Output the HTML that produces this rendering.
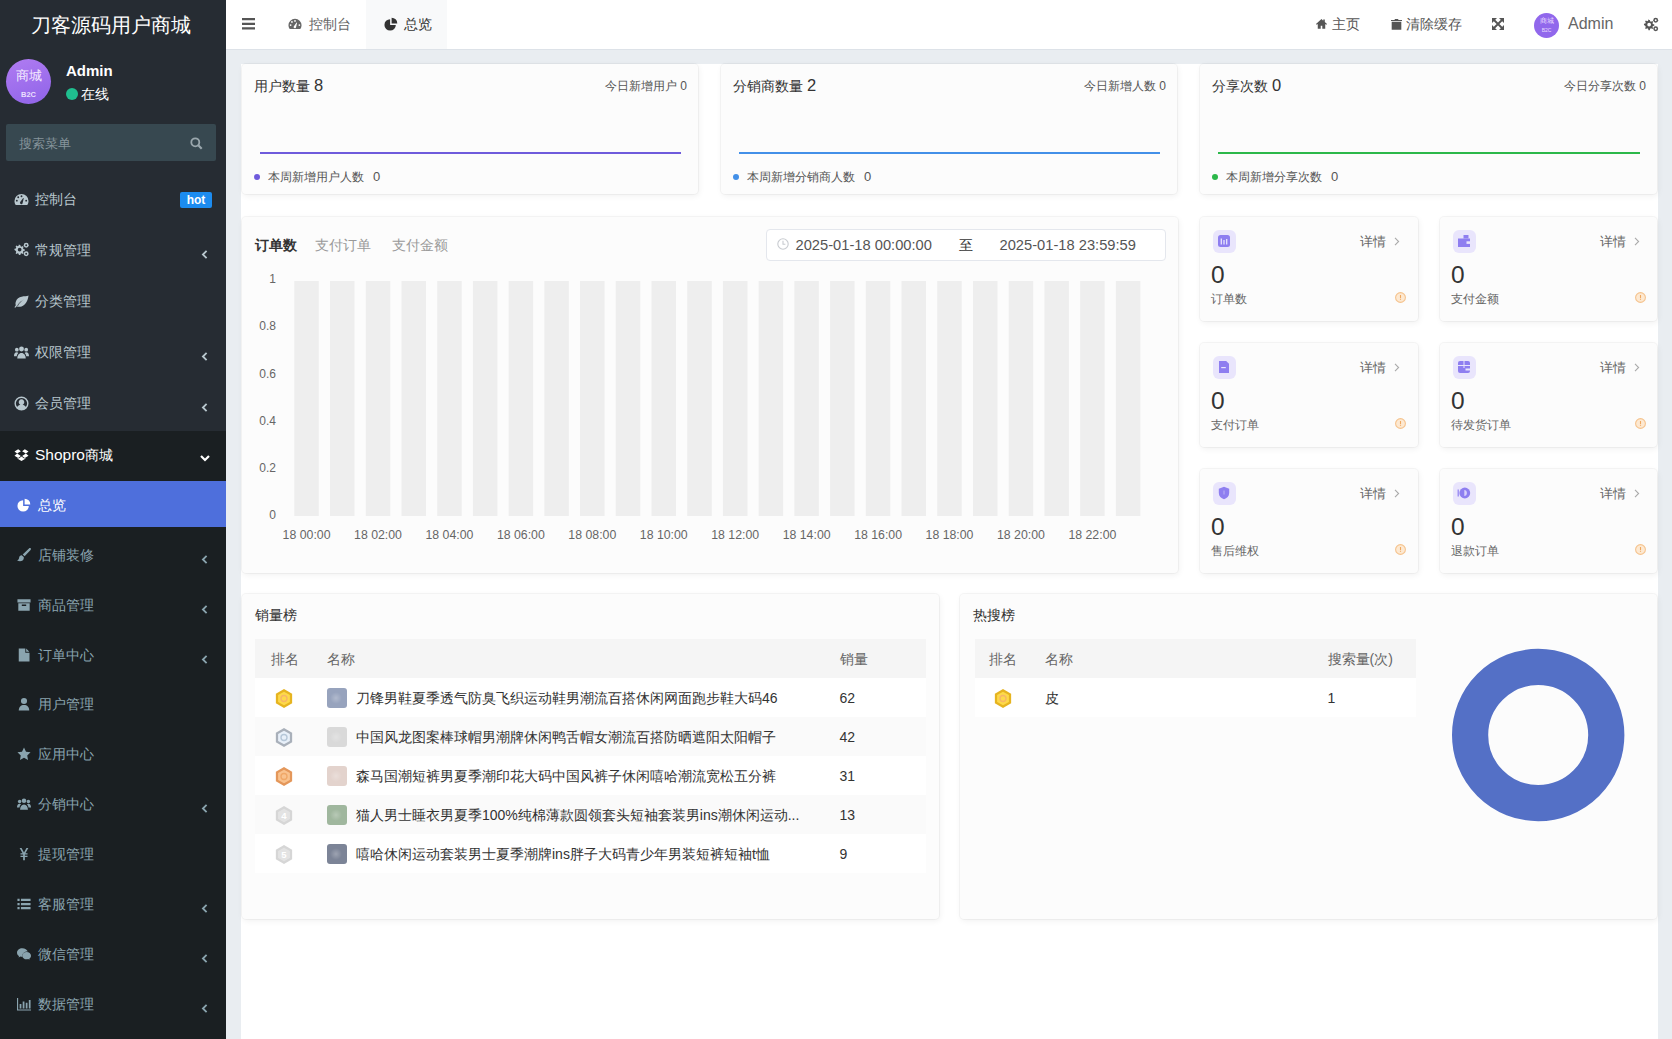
<!DOCTYPE html><html><head><meta charset="utf-8"><style>
*{box-sizing:border-box;margin:0;padding:0}
html,body{width:1672px;height:1039px;overflow:hidden}
body{font-family:"Liberation Sans",sans-serif;background:#e9edf1;position:relative;color:#333}
.a{position:absolute;white-space:nowrap}
svg{position:absolute;overflow:visible}
#sb{position:absolute;left:0;top:0;width:226px;height:1039px;background:#262c33;overflow:hidden}
#sb2{position:absolute;left:0;top:431px;width:226px;height:608px;background:#1a1f22}
.logo{left:0;width:221px;top:11px;line-height:28px;font-size:20px;color:#fff;text-align:center}
.mi{position:absolute;left:0;width:226px;height:20px;color:#b8c7ce;font-size:14px;line-height:20px}
.mi .tx{position:absolute;left:35px;top:0}
.sub{color:#8aa4af}
.sub .tx{left:38px}
#hd{position:absolute;left:226px;top:0;width:1446px;height:50px;background:#fff;border-bottom:1px solid #dde2e8}
#main{position:absolute;left:241px;top:64px;width:1417px;height:975px;background:#fff}
.card{position:absolute;background:#fcfcfc;border-radius:4px;box-shadow:0 0 0 1px rgba(0,0,0,.035),1px 2px 6px rgba(0,0,0,.06)}
.t14{font-size:14px;line-height:20px}
.t12{font-size:12px;line-height:16px}
</style></head><body>
<div id="sb"><div id="sb2"></div>
<div class="a logo">刀客源码用户商城</div>
<div class="a" style="left:6px;top:59px;width:45px;height:45px;border-radius:50%;background:linear-gradient(160deg,#b07cf2,#8f63e8)"></div>
<div class="a" style="left:6px;top:66.5px;width:45px;text-align:center;font-size:13px;line-height:17px;color:#f3eaff">商城</div>
<div class="a" style="left:6px;top:90px;width:45px;text-align:center;font-size:7.5px;line-height:9px;color:#eadfff;font-weight:bold">B2C</div>
<div class="a" style="left:66px;top:61px;font-size:15px;line-height:20px;color:#fff;font-weight:bold">Admin</div>
<div class="a" style="left:66px;top:88px;width:12px;height:12px;border-radius:50%;background:#1fbf8f"></div>
<div class="a" style="left:81px;top:84px;font-size:14px;line-height:20px;color:#fff">在线</div>
<div class="a" style="left:6px;top:124px;width:210px;height:37px;background:#374850;border-radius:2px"></div>
<div class="a" style="left:19px;top:134px;font-size:13px;line-height:20px;color:#86949b">搜索菜单</div>
<svg style="left:190px;top:137px" width="13" height="13" viewBox="0 0 13 13"><circle cx="5.3" cy="5.3" r="4" stroke="#9aa7ad" stroke-width="1.8" fill="none"/><path d="M8.3 8.3l3.4 3.4" stroke="#9aa7ad" stroke-width="2.2"/></svg>
<div class="mi" style="top:189.4px"><span class="tx">控制台</span></div>
<svg style="left:13.5px;top:191.9px" width="15" height="15" viewBox="0 0 16 16" fill="#b8c7ce"><path d="M8 2A7.5 7.5 0 0 0 .5 9.5c0 1.6.5 3.1 1.4 4.3h12.2c.9-1.2 1.4-2.7 1.4-4.3A7.5 7.5 0 0 0 8 2zM3 10.2a1 1 0 1 1 0-2 1 1 0 0 1 0 2zm1.5-3.6a1 1 0 1 1 0-2 1 1 0 0 1 0 2zM8 5.5a1 1 0 1 1 0-2 1 1 0 0 1 0 2zm1.2 6.2a1.4 1.4 0 1 1-2.4-1.2l3-4.2.6.3zM13 10.2a1 1 0 1 1 0-2 1 1 0 0 1 0 2z" fill-rule="evenodd"/></svg>
<div class="a" style="left:180px;top:191.9px;width:32px;height:16px;background:#1c8cf0;border-radius:2px;color:#fff;font-size:12px;font-weight:bold;line-height:16px;text-align:center">hot</div>
<div class="mi" style="top:239.7px"><span class="tx">常规管理</span></div>
<svg style="left:13.5px;top:242.2px" width="15" height="15" viewBox="0 0 16 16" fill="#b8c7ce"><path d="M6 3.2l.7-.1.4 1.4 1 .5 1.3-.7.9.9-.7 1.3.4 1 1.5.4v1.3l-1.5.4-.4 1 .7 1.3-.9.9-1.3-.7-1 .4-.4 1.5H5.3l-.4-1.5-1-.4-1.3.7-.9-.9.7-1.3-.4-1L.5 8.6V7.3L2 6.9l.4-1-.7-1.3.9-.9 1.3.7 1-.5.4-1.4zM6 6a2 2 0 1 0 0 4 2 2 0 0 0 0-4z" fill-rule="evenodd"/><circle cx="13" cy="3.5" r="2.6"/><circle cx="13" cy="12.5" r="2.6"/><circle cx="13" cy="3.5" r="1" fill="#262c33"/><circle cx="13" cy="12.5" r="1" fill="#262c33"/></svg>
<svg style="left:201.0px;top:249.7px" width="7" height="9" viewBox="0 0 7 9"><path d="M5.6 .8L1.9 4.5l3.7 3.7" stroke="#b8c7ce" stroke-width="1.8" fill="none"/></svg>
<div class="mi" style="top:291.0px"><span class="tx">分类管理</span></div>
<svg style="left:13.5px;top:293.5px" width="15" height="15" viewBox="0 0 16 16" fill="#b8c7ce"><path d="M15.5 1.5C12 3 4 1 1.8 8.5c-.4 1.4-.3 2.6.1 3.6L.5 14l.8.7 1.6-1.6c1.3.7 3.2.9 5.2.1C14 10.8 15 5 15.5 1.5zM3.5 12.2c2-3 4.5-5 7.5-6.5-3.5 2.2-5.5 4.5-6.8 7z" fill-rule="evenodd"/></svg>
<div class="mi" style="top:342.4px"><span class="tx">权限管理</span></div>
<svg style="left:13.5px;top:344.9px" width="15" height="15" viewBox="0 0 16 16" fill="#b8c7ce"><circle cx="8" cy="4.2" r="2.6"/><circle cx="3" cy="5" r="2"/><circle cx="13" cy="5" r="2"/><path d="M3.5 14.5c0-3.5 1.8-6 4.5-6s4.5 2.5 4.5 6z"/><path d="M0 12c0-2.5 1-4.2 3-4.2.8 0 1.3.3 1.6.6C3.6 9.3 3 10.6 2.9 12zM16 12c0-2.5-1-4.2-3-4.2-.8 0-1.3.3-1.6.6 1 .9 1.6 2.2 1.7 3.6z"/></svg>
<svg style="left:201.0px;top:352.4px" width="7" height="9" viewBox="0 0 7 9"><path d="M5.6 .8L1.9 4.5l3.7 3.7" stroke="#b8c7ce" stroke-width="1.8" fill="none"/></svg>
<div class="mi" style="top:393.3px"><span class="tx">会员管理</span></div>
<svg style="left:13.5px;top:395.8px" width="15" height="15" viewBox="0 0 16 16" fill="#b8c7ce"><path d="M8 .5a7.5 7.5 0 1 0 0 15 7.5 7.5 0 0 0 0-15zm0 1.6a5.9 5.9 0 0 1 4.6 9.6c-.8-1.4-2.2-2.2-3.4-2.4a3 3 0 1 0-2.4 0c-1.2.2-2.6 1-3.4 2.4A5.9 5.9 0 0 1 8 2.1z" fill-rule="evenodd"/></svg>
<svg style="left:201.0px;top:403.3px" width="7" height="9" viewBox="0 0 7 9"><path d="M5.6 .8L1.9 4.5l3.7 3.7" stroke="#b8c7ce" stroke-width="1.8" fill="none"/></svg>
<div class="mi" style="top:444.7px;color:#fff"><span class="tx"><span style="font-size:15.5px">Shopro</span>商城</span></div>
<svg style="left:14px;top:447.7px" width="15" height="14" viewBox="0 0 16 16" fill="#fff"><path d="M4.2 1.3L0 4l3 2.4L7.3 3.8zM11.8 1.3L8.7 3.8 13 6.4 16 4zM0 8.8l4.2 2.7L7.3 9 3 6.4zM13 6.4L8.7 9l3.1 2.5L16 8.8zM8 9.6l-3.1 2.5-1.3-.8v.9L8 14.8l4.4-2.6v-.9l-1.3.8z"/></svg>
<svg style="left:200px;top:453.7px" width="10" height="8" viewBox="0 0 10 8"><path d="M1 2l4 4 4-4" stroke="#fff" stroke-width="2.2" fill="none"/></svg>
<div class="a" style="left:0;top:481px;width:226px;height:46px;background:#4e6fdc"></div>
<div class="mi sub" style="top:495.0px;color:#fff"><span class="tx">总览</span></div>
<svg style="left:16.5px;top:498.0px" width="14" height="14" viewBox="0 0 16 16" fill="#fff"><path d="M7 2.5a6.5 6.5 0 1 0 6.5 6.5H7zM8.7.8v6.5h6.5A6.5 6.5 0 0 0 8.7.8z"/></svg>
<div class="mi sub" style="top:544.9px;color:#8aa4af"><span class="tx">店铺装修</span></div>
<svg style="left:16.5px;top:547.85px" width="14" height="14" viewBox="0 0 16 16" fill="#8aa4af"><path d="M15.6.4c-.5-.5-1.3-.4-1.9.1L6.5 7.3l2.2 2.2 6.8-7.2c.5-.6.6-1.4.1-1.9zM5.4 8.3C3.6 8.3 2.6 9.5 2.4 11 2.2 12.6 1.5 13.5 0 14c2.6 1.8 6.5 1.4 7.6-1.4.3-.9.3-1.6.1-2.2z"/></svg>
<svg style="left:201.0px;top:554.85px" width="7" height="9" viewBox="0 0 7 9"><path d="M5.6 .8L1.9 4.5l3.7 3.7" stroke="#8aa4af" stroke-width="1.8" fill="none"/></svg>
<div class="mi sub" style="top:594.7px;color:#8aa4af"><span class="tx">商品管理</span></div>
<svg style="left:16.5px;top:597.7px" width="14" height="14" viewBox="0 0 16 16" fill="#8aa4af"><path d="M.5 1.5h15v3.5H.5zM1.5 6h13v8.5h-13zM5.5 7.5v1.5h5V7.5z" fill-rule="evenodd"/></svg>
<svg style="left:201.0px;top:604.7px" width="7" height="9" viewBox="0 0 7 9"><path d="M5.6 .8L1.9 4.5l3.7 3.7" stroke="#8aa4af" stroke-width="1.8" fill="none"/></svg>
<div class="mi sub" style="top:644.5px;color:#8aa4af"><span class="tx">订单中心</span></div>
<svg style="left:16.5px;top:647.55px" width="14" height="14" viewBox="0 0 16 16" fill="#8aa4af"><path d="M2 .5h7.5v4.8h4.8V15.5H2zM10.5.7l3.6 3.6h-3.6z"/></svg>
<svg style="left:201.0px;top:654.55px" width="7" height="9" viewBox="0 0 7 9"><path d="M5.6 .8L1.9 4.5l3.7 3.7" stroke="#8aa4af" stroke-width="1.8" fill="none"/></svg>
<div class="mi sub" style="top:694.4px;color:#8aa4af"><span class="tx">用户管理</span></div>
<svg style="left:16.5px;top:697.4px" width="14" height="14" viewBox="0 0 16 16" fill="#8aa4af"><circle cx="8" cy="4.5" r="3.5"/><path d="M2 15.5c0-4 2.4-6.3 6-6.3s6 2.3 6 6.3z"/></svg>
<div class="mi sub" style="top:744.2px;color:#8aa4af"><span class="tx">应用中心</span></div>
<svg style="left:16.5px;top:747.25px" width="14" height="14" viewBox="0 0 16 16" fill="#8aa4af"><path d="M8 .6l2.3 4.8 5.2.7-3.8 3.6.9 5.2L8 12.4l-4.6 2.5.9-5.2L.5 6.1l5.2-.7z"/></svg>
<div class="mi sub" style="top:794.1px;color:#8aa4af"><span class="tx">分销中心</span></div>
<svg style="left:16.5px;top:797.1px" width="14" height="14" viewBox="0 0 16 16" fill="#8aa4af"><circle cx="8" cy="4.2" r="2.6"/><circle cx="3" cy="5" r="2"/><circle cx="13" cy="5" r="2"/><path d="M3.5 14.5c0-3.5 1.8-6 4.5-6s4.5 2.5 4.5 6z"/><path d="M0 12c0-2.5 1-4.2 3-4.2.8 0 1.3.3 1.6.6C3.6 9.3 3 10.6 2.9 12zM16 12c0-2.5-1-4.2-3-4.2-.8 0-1.3.3-1.6.6 1 .9 1.6 2.2 1.7 3.6z"/></svg>
<svg style="left:201.0px;top:804.1px" width="7" height="9" viewBox="0 0 7 9"><path d="M5.6 .8L1.9 4.5l3.7 3.7" stroke="#8aa4af" stroke-width="1.8" fill="none"/></svg>
<div class="mi sub" style="top:844.0px;color:#8aa4af"><span class="tx">提现管理</span></div>
<svg style="left:16.5px;top:846.95px" width="14" height="14" viewBox="0 0 16 16" fill="#8aa4af"><path d="M3 1h2.2L8 6.2 10.8 1H13L9.6 7H12v1.5H9v1.5h3v1.5H9V15H7v-3.5H4V10h3V8.5H4V7h2.4z"/></svg>
<div class="mi sub" style="top:893.8px;color:#8aa4af"><span class="tx">客服管理</span></div>
<svg style="left:16.5px;top:896.8px" width="14" height="14" viewBox="0 0 16 16" fill="#8aa4af"><path d="M.5 2h2.5v2.5H.5zM4.5 2h11v2.5h-11zM.5 6.8h2.5v2.5H.5zM4.5 6.8h11v2.5h-11zM.5 11.5h2.5V14H.5zM4.5 11.5h11V14h-11z"/></svg>
<svg style="left:201.0px;top:903.8px" width="7" height="9" viewBox="0 0 7 9"><path d="M5.6 .8L1.9 4.5l3.7 3.7" stroke="#8aa4af" stroke-width="1.8" fill="none"/></svg>
<div class="mi sub" style="top:943.7px;color:#8aa4af"><span class="tx">微信管理</span></div>
<svg style="left:16.5px;top:946.6500000000001px" width="14" height="14" viewBox="0 0 16 16" fill="#8aa4af"><path d="M6 1.5C2.7 1.5 0 3.7 0 6.5c0 1.6.9 3 2.3 3.9L1.8 12l2-1.1c.6.2 1.4.3 2.1.3h.4a4.6 4.6 0 0 1-.2-1.3c0-2.7 2.6-4.9 5.9-4.9h.3C11.6 3.1 9.1 1.5 6 1.5z"/><path d="M16 9.9c0-2.3-2.3-4.2-5-4.2S6 7.6 6 9.9s2.3 4.2 5 4.2c.6 0 1.2-.1 1.7-.3l1.7.9-.4-1.4c1.2-.8 2-2 2-3.4z"/></svg>
<svg style="left:201.0px;top:953.6500000000001px" width="7" height="9" viewBox="0 0 7 9"><path d="M5.6 .8L1.9 4.5l3.7 3.7" stroke="#8aa4af" stroke-width="1.8" fill="none"/></svg>
<div class="mi sub" style="top:993.5px;color:#8aa4af"><span class="tx">数据管理</span></div>
<svg style="left:16.5px;top:996.5px" width="14" height="14" viewBox="0 0 16 16" fill="#8aa4af"><path d="M0 1h1.3v13.2H16V15.5H0zM3 8h2v5H3zM6.5 5h2v8h-2zM10 6.5h2V13h-2zM13.5 3.5h2V13h-2z"/></svg>
<svg style="left:201.0px;top:1003.5px" width="7" height="9" viewBox="0 0 7 9"><path d="M5.6 .8L1.9 4.5l3.7 3.7" stroke="#8aa4af" stroke-width="1.8" fill="none"/></svg>
</div>
<div id="hd"></div>
<svg style="left:242px;top:18px" width="14" height="12" viewBox="0 0 14 12"><path d="M0 1.2h13M0 5.8h13M0 10.4h13" stroke="#555" stroke-width="2.2"/></svg>
<svg style="left:288px;top:17px" width="14" height="14" viewBox="0 0 16 16" fill="#666"><path d="M8 2A7.5 7.5 0 0 0 .5 9.5c0 1.6.5 3.1 1.4 4.3h12.2c.9-1.2 1.4-2.7 1.4-4.3A7.5 7.5 0 0 0 8 2zM3 10.2a1 1 0 1 1 0-2 1 1 0 0 1 0 2zm1.5-3.6a1 1 0 1 1 0-2 1 1 0 0 1 0 2zM8 5.5a1 1 0 1 1 0-2 1 1 0 0 1 0 2zm1.2 6.2a1.4 1.4 0 1 1-2.4-1.2l3-4.2.6.3zM13 10.2a1 1 0 1 1 0-2 1 1 0 0 1 0 2z" fill-rule="evenodd"/></svg>
<div class="a" style="left:309px;top:14.00px;font-size:14px;line-height:20px;color:#666;font-weight:normal;">控制台</div>
<div class="a" style="left:366px;top:0;width:81px;height:49px;background:#f8f9fa"></div>
<svg style="left:383.5px;top:17px" width="14" height="14" viewBox="0 0 16 16" fill="#333"><path d="M7 2.5a6.5 6.5 0 1 0 6.5 6.5H7zM8.7.8v6.5h6.5A6.5 6.5 0 0 0 8.7.8z"/></svg>
<div class="a" style="left:404px;top:14.00px;font-size:14px;line-height:20px;color:#333;font-weight:normal;">总览</div>
<svg style="left:1315px;top:18px" width="13" height="11.5" viewBox="0 0 16 16" fill="#555"><path d="M8 1.5L.3 8.3l1.1 1.2L2.8 8.3V15h4.1v-4.2h2.2V15h4.1V8.3l1.4 1.2 1.1-1.2L12.6 5.6V2h-2.2v1.7z"/></svg>
<div class="a" style="left:1332px;top:14.00px;font-size:14px;line-height:20px;color:#555;font-weight:normal;">主页</div>
<svg style="left:1390.5px;top:17.5px" width="11" height="13" viewBox="0 0 16 16" fill="#555"><path d="M1 4h14v11.5H1zM0 1.5h5L5.8 0h4.4L11 1.5h5V3H0z"/></svg>
<div class="a" style="left:1406px;top:14.00px;font-size:14px;line-height:20px;color:#555;font-weight:normal;">清除缓存</div>
<svg style="left:1492px;top:18px" width="12" height="12" viewBox="0 0 12 12" fill="#555"><path d="M0 0h5L0 5zM12 0v5L7 0zM0 12V7l5 5zM12 12H7l5-5z"/><path d="M1.5 1.5l9 9M10.5 1.5l-9 9" stroke="#555" stroke-width="1.9"/></svg>
<div class="a" style="left:1534px;top:13px;width:25px;height:25px;border-radius:50%;background:#9168ec"></div>
<div class="a" style="left:1534px;top:16px;width:25px;text-align:center;font-size:7px;line-height:9px;color:#e9ddff">商城</div>
<div class="a" style="left:1534px;top:27px;width:25px;text-align:center;font-size:5px;line-height:6px;color:#e9ddff">B2C</div>
<div class="a" style="left:1568px;top:14px;font-size:16px;line-height:20px;color:#666">Admin</div>
<svg style="left:1642.5px;top:17px" width="16" height="15" viewBox="0 0 16 16" fill="#555"><path d="M6 3.2l.7-.1.4 1.4 1 .5 1.3-.7.9.9-.7 1.3.4 1 1.5.4v1.3l-1.5.4-.4 1 .7 1.3-.9.9-1.3-.7-1 .4-.4 1.5H5.3l-.4-1.5-1-.4-1.3.7-.9-.9.7-1.3-.4-1L.5 8.6V7.3L2 6.9l.4-1-.7-1.3.9-.9 1.3.7 1-.5.4-1.4zM6 6a2 2 0 1 0 0 4 2 2 0 0 0 0-4z" fill-rule="evenodd"/><circle cx="13" cy="3.5" r="2.6"/><circle cx="13" cy="12.5" r="2.6"/><circle cx="13" cy="3.5" r="1" fill="#fff"/><circle cx="13" cy="12.5" r="1" fill="#fff"/></svg>
<div id="main"></div>
<div class="card" style="left:242px;top:64px;width:456px;height:130px;"></div>
<div class="a" style="left:254px;top:74.60px;font-size:14px;line-height:20px;color:#333;font-weight:normal;">用户数量 <span style="font-size:16.5px">8</span></div>
<div class="a" style="right:985px;top:77.50px;font-size:12px;line-height:16px;color:#555;font-weight:normal;">今日新增用户 0</div>
<div class="a" style="left:260px;top:152px;width:421px;height:2px;background:#6f5bdc"></div>
<div class="a" style="left:254px;top:174px;width:6px;height:6px;border-radius:50%;background:#6f5bdc"></div>
<div class="a" style="left:267.5px;top:169.00px;font-size:12px;line-height:16px;color:#555;font-weight:normal;">本周新增用户人数<span style="margin-left:9.5px;font-size:13px">0</span></div>
<div class="card" style="left:721px;top:64px;width:456px;height:130px;"></div>
<div class="a" style="left:733px;top:74.60px;font-size:14px;line-height:20px;color:#333;font-weight:normal;">分销商数量 <span style="font-size:16.5px">2</span></div>
<div class="a" style="right:506px;top:77.50px;font-size:12px;line-height:16px;color:#555;font-weight:normal;">今日新增人数 0</div>
<div class="a" style="left:739px;top:152px;width:421px;height:2px;background:#4390e8"></div>
<div class="a" style="left:733px;top:174px;width:6px;height:6px;border-radius:50%;background:#4390e8"></div>
<div class="a" style="left:746.5px;top:169.00px;font-size:12px;line-height:16px;color:#555;font-weight:normal;">本周新增分销商人数<span style="margin-left:9.5px;font-size:13px">0</span></div>
<div class="card" style="left:1200px;top:64px;width:457px;height:130px;"></div>
<div class="a" style="left:1212px;top:74.60px;font-size:14px;line-height:20px;color:#333;font-weight:normal;">分享次数 <span style="font-size:16.5px">0</span></div>
<div class="a" style="right:26px;top:77.50px;font-size:12px;line-height:16px;color:#555;font-weight:normal;">今日分享次数 0</div>
<div class="a" style="left:1218px;top:152px;width:422px;height:2px;background:#2cb84a"></div>
<div class="a" style="left:1212px;top:174px;width:6px;height:6px;border-radius:50%;background:#2cb84a"></div>
<div class="a" style="left:1225.5px;top:169.00px;font-size:12px;line-height:16px;color:#555;font-weight:normal;">本周新增分享次数<span style="margin-left:9.5px;font-size:13px">0</span></div>
<div class="card" style="left:242px;top:217px;width:936px;height:356px;"></div>
<div class="a" style="left:254.5px;top:235.00px;font-size:14px;line-height:20px;color:#333;font-weight:bold;">订单数</div>
<div class="a" style="left:315px;top:235.00px;font-size:14px;line-height:20px;color:#999;font-weight:normal;">支付订单</div>
<div class="a" style="left:392px;top:235.00px;font-size:14px;line-height:20px;color:#999;font-weight:normal;">支付金额</div>
<div class="a" style="left:766px;top:229px;width:400px;height:32px;border:1px solid #e4e7ed;border-radius:4px;background:#fff"></div>
<svg style="left:777px;top:238px" width="12" height="12" viewBox="0 0 12 12"><circle cx="6" cy="6" r="5.2" stroke="#c8cbd0" stroke-width="1.1" fill="none"/><path d="M6 2.8V6.3h2.4" stroke="#c8cbd0" stroke-width="1.1" fill="none"/></svg>
<div class="a" style="left:795.5px;top:234.50px;font-size:14.7px;line-height:20px;color:#555;font-weight:normal;">2025-01-18 00:00:00</div>
<div class="a" style="left:959px;top:234.50px;font-size:14px;line-height:20px;color:#333;font-weight:normal;">至</div>
<div class="a" style="left:999.5px;top:234.50px;font-size:14.7px;line-height:20px;color:#555;font-weight:normal;">2025-01-18 23:59:59</div>
<div class="a" style="right:1396px;top:271.30px;font-size:12px;line-height:16px;color:#666;font-weight:normal;">1</div>
<div class="a" style="right:1396px;top:318.30px;font-size:12px;line-height:16px;color:#666;font-weight:normal;">0.8</div>
<div class="a" style="right:1396px;top:365.60px;font-size:12px;line-height:16px;color:#666;font-weight:normal;">0.6</div>
<div class="a" style="right:1396px;top:412.80px;font-size:12px;line-height:16px;color:#666;font-weight:normal;">0.4</div>
<div class="a" style="right:1396px;top:460.00px;font-size:12px;line-height:16px;color:#666;font-weight:normal;">0.2</div>
<div class="a" style="right:1396px;top:507.20px;font-size:12px;line-height:16px;color:#666;font-weight:normal;">0</div>
<svg style="left:0;top:0" width="1672" height="1039" fill="#eeeeee"><rect x="294.30" y="281" width="24.5" height="235" /><rect x="330.02" y="281" width="24.5" height="235" /><rect x="365.74" y="281" width="24.5" height="235" /><rect x="401.46" y="281" width="24.5" height="235" /><rect x="437.18" y="281" width="24.5" height="235" /><rect x="472.90" y="281" width="24.5" height="235" /><rect x="508.62" y="281" width="24.5" height="235" /><rect x="544.34" y="281" width="24.5" height="235" /><rect x="580.06" y="281" width="24.5" height="235" /><rect x="615.78" y="281" width="24.5" height="235" /><rect x="651.50" y="281" width="24.5" height="235" /><rect x="687.22" y="281" width="24.5" height="235" /><rect x="722.94" y="281" width="24.5" height="235" /><rect x="758.66" y="281" width="24.5" height="235" /><rect x="794.38" y="281" width="24.5" height="235" /><rect x="830.10" y="281" width="24.5" height="235" /><rect x="865.82" y="281" width="24.5" height="235" /><rect x="901.54" y="281" width="24.5" height="235" /><rect x="937.26" y="281" width="24.5" height="235" /><rect x="972.98" y="281" width="24.5" height="235" /><rect x="1008.70" y="281" width="24.5" height="235" /><rect x="1044.42" y="281" width="24.5" height="235" /><rect x="1080.14" y="281" width="24.5" height="235" /><rect x="1115.86" y="281" width="24.5" height="235" /></svg>
<div class="a" style="left:106.55000000000001px;width:400px;text-align:center;top:527.20px;font-size:12.3px;line-height:16px;color:#666;font-weight:normal;">18 00:00</div>
<div class="a" style="left:177.99px;width:400px;text-align:center;top:527.20px;font-size:12.3px;line-height:16px;color:#666;font-weight:normal;">18 02:00</div>
<div class="a" style="left:249.43px;width:400px;text-align:center;top:527.20px;font-size:12.3px;line-height:16px;color:#666;font-weight:normal;">18 04:00</div>
<div class="a" style="left:320.87px;width:400px;text-align:center;top:527.20px;font-size:12.3px;line-height:16px;color:#666;font-weight:normal;">18 06:00</div>
<div class="a" style="left:392.30999999999995px;width:400px;text-align:center;top:527.20px;font-size:12.3px;line-height:16px;color:#666;font-weight:normal;">18 08:00</div>
<div class="a" style="left:463.75px;width:400px;text-align:center;top:527.20px;font-size:12.3px;line-height:16px;color:#666;font-weight:normal;">18 10:00</div>
<div class="a" style="left:535.19px;width:400px;text-align:center;top:527.20px;font-size:12.3px;line-height:16px;color:#666;font-weight:normal;">18 12:00</div>
<div class="a" style="left:606.63px;width:400px;text-align:center;top:527.20px;font-size:12.3px;line-height:16px;color:#666;font-weight:normal;">18 14:00</div>
<div class="a" style="left:678.0699999999999px;width:400px;text-align:center;top:527.20px;font-size:12.3px;line-height:16px;color:#666;font-weight:normal;">18 16:00</div>
<div class="a" style="left:749.51px;width:400px;text-align:center;top:527.20px;font-size:12.3px;line-height:16px;color:#666;font-weight:normal;">18 18:00</div>
<div class="a" style="left:820.95px;width:400px;text-align:center;top:527.20px;font-size:12.3px;line-height:16px;color:#666;font-weight:normal;">18 20:00</div>
<div class="a" style="left:892.3899999999999px;width:400px;text-align:center;top:527.20px;font-size:12.3px;line-height:16px;color:#666;font-weight:normal;">18 22:00</div>
<div class="card" style="left:1200px;top:217px;width:218px;height:104px;"></div>
<div class="a" style="left:1212.5px;top:229.5px;width:23px;height:23px;border-radius:6px;background:#e9e5fc"></div>
<svg style="left:1216px;top:233px" width="16" height="16" viewBox="0 0 16 16" fill="#8e7ef0"><rect x="2" y="2" width="12" height="12" rx="2.5"/><path d="M5.3 5.5v6M8 7v4.5M10.7 6v5.5" stroke="#e9e5fc" stroke-width="1.3"/></svg>
<div class="a" style="left:1360.3px;top:233.50px;font-size:12.5px;line-height:16px;color:#666;font-weight:normal;">详情</div>
<svg style="left:1394px;top:237px" width="6" height="9" viewBox="0 0 6 9"><path d="M1 .8l3.6 3.7L1 8.2" stroke="#aaa" stroke-width="1.1" fill="none"/></svg>
<div class="a" style="left:1211px;top:260.00px;font-size:24.5px;line-height:30px;color:#333;font-weight:normal;">0</div>
<div class="a" style="left:1211px;top:291.00px;font-size:12px;line-height:16px;color:#666;font-weight:normal;">订单数</div>
<svg style="left:1394.5px;top:292px" width="11" height="11" viewBox="0 0 11 11"><circle cx="5.5" cy="5.5" r="4.9" stroke="#f5c38e" stroke-width="1.1" fill="#fde9d2"/><path d="M5.5 3v3.2M5.5 7.2v.9" stroke="#f0a860" stroke-width="1.1"/></svg>
<div class="card" style="left:1440px;top:217px;width:217px;height:104px;"></div>
<div class="a" style="left:1452.5px;top:229.5px;width:23px;height:23px;border-radius:6px;background:#e9e5fc"></div>
<svg style="left:1456px;top:233px" width="16" height="16" viewBox="0 0 16 16" fill="#8e7ef0"><path d="M2 5.5h12v8.5H2z"/><path d="M7.5 2h5v3.5h-5z"/><rect x="10.5" y="8.3" width="3.5" height="2.6" fill="#e9e5fc"/></svg>
<div class="a" style="left:1600.3px;top:233.50px;font-size:12.5px;line-height:16px;color:#666;font-weight:normal;">详情</div>
<svg style="left:1634px;top:237px" width="6" height="9" viewBox="0 0 6 9"><path d="M1 .8l3.6 3.7L1 8.2" stroke="#aaa" stroke-width="1.1" fill="none"/></svg>
<div class="a" style="left:1451px;top:260.00px;font-size:24.5px;line-height:30px;color:#333;font-weight:normal;">0</div>
<div class="a" style="left:1451px;top:291.00px;font-size:12px;line-height:16px;color:#666;font-weight:normal;">支付金额</div>
<svg style="left:1634.5px;top:292px" width="11" height="11" viewBox="0 0 11 11"><circle cx="5.5" cy="5.5" r="4.9" stroke="#f5c38e" stroke-width="1.1" fill="#fde9d2"/><path d="M5.5 3v3.2M5.5 7.2v.9" stroke="#f0a860" stroke-width="1.1"/></svg>
<div class="card" style="left:1200px;top:343px;width:218px;height:104px;"></div>
<div class="a" style="left:1212.5px;top:355.5px;width:23px;height:23px;border-radius:6px;background:#e9e5fc"></div>
<svg style="left:1216px;top:359px" width="16" height="16" viewBox="0 0 16 16" fill="#8e7ef0"><path d="M3 2h7.2L13 4.8V14H3z"/><path d="M5.2 8.6h4.6" stroke="#e9e5fc" stroke-width="1.2"/></svg>
<div class="a" style="left:1360.3px;top:359.50px;font-size:12.5px;line-height:16px;color:#666;font-weight:normal;">详情</div>
<svg style="left:1394px;top:363px" width="6" height="9" viewBox="0 0 6 9"><path d="M1 .8l3.6 3.7L1 8.2" stroke="#aaa" stroke-width="1.1" fill="none"/></svg>
<div class="a" style="left:1211px;top:386.00px;font-size:24.5px;line-height:30px;color:#333;font-weight:normal;">0</div>
<div class="a" style="left:1211px;top:417.00px;font-size:12px;line-height:16px;color:#666;font-weight:normal;">支付订单</div>
<svg style="left:1394.5px;top:418px" width="11" height="11" viewBox="0 0 11 11"><circle cx="5.5" cy="5.5" r="4.9" stroke="#f5c38e" stroke-width="1.1" fill="#fde9d2"/><path d="M5.5 3v3.2M5.5 7.2v.9" stroke="#f0a860" stroke-width="1.1"/></svg>
<div class="card" style="left:1440px;top:343px;width:217px;height:104px;"></div>
<div class="a" style="left:1452.5px;top:355.5px;width:23px;height:23px;border-radius:6px;background:#e9e5fc"></div>
<svg style="left:1456px;top:359px" width="16" height="16" viewBox="0 0 16 16" fill="#8e7ef0"><rect x="2" y="2" width="12" height="12" rx="2"/><path d="M8 2v7M2 6.5h12" stroke="#e9e5fc" stroke-width="1"/><rect x="9.5" y="9.5" width="4.5" height="2" fill="#e9e5fc"/></svg>
<div class="a" style="left:1600.3px;top:359.50px;font-size:12.5px;line-height:16px;color:#666;font-weight:normal;">详情</div>
<svg style="left:1634px;top:363px" width="6" height="9" viewBox="0 0 6 9"><path d="M1 .8l3.6 3.7L1 8.2" stroke="#aaa" stroke-width="1.1" fill="none"/></svg>
<div class="a" style="left:1451px;top:386.00px;font-size:24.5px;line-height:30px;color:#333;font-weight:normal;">0</div>
<div class="a" style="left:1451px;top:417.00px;font-size:12px;line-height:16px;color:#666;font-weight:normal;">待发货订单</div>
<svg style="left:1634.5px;top:418px" width="11" height="11" viewBox="0 0 11 11"><circle cx="5.5" cy="5.5" r="4.9" stroke="#f5c38e" stroke-width="1.1" fill="#fde9d2"/><path d="M5.5 3v3.2M5.5 7.2v.9" stroke="#f0a860" stroke-width="1.1"/></svg>
<div class="card" style="left:1200px;top:469px;width:218px;height:104px;"></div>
<div class="a" style="left:1212.5px;top:481.5px;width:23px;height:23px;border-radius:6px;background:#e9e5fc"></div>
<svg style="left:1216px;top:485px" width="16" height="16" viewBox="0 0 16 16" fill="#8e7ef0"><path d="M8 1.8l5.2 1.9v4.4c0 3.2-2.3 5.3-5.2 6.2-2.9-.9-5.2-3-5.2-6.2V3.7z"/><path d="M8 5.5v4" stroke="#e9e5fc" stroke-width="1" opacity=".5"/></svg>
<div class="a" style="left:1360.3px;top:485.50px;font-size:12.5px;line-height:16px;color:#666;font-weight:normal;">详情</div>
<svg style="left:1394px;top:489px" width="6" height="9" viewBox="0 0 6 9"><path d="M1 .8l3.6 3.7L1 8.2" stroke="#aaa" stroke-width="1.1" fill="none"/></svg>
<div class="a" style="left:1211px;top:512.00px;font-size:24.5px;line-height:30px;color:#333;font-weight:normal;">0</div>
<div class="a" style="left:1211px;top:543.00px;font-size:12px;line-height:16px;color:#666;font-weight:normal;">售后维权</div>
<svg style="left:1394.5px;top:544px" width="11" height="11" viewBox="0 0 11 11"><circle cx="5.5" cy="5.5" r="4.9" stroke="#f5c38e" stroke-width="1.1" fill="#fde9d2"/><path d="M5.5 3v3.2M5.5 7.2v.9" stroke="#f0a860" stroke-width="1.1"/></svg>
<div class="card" style="left:1440px;top:469px;width:217px;height:104px;"></div>
<div class="a" style="left:1452.5px;top:481.5px;width:23px;height:23px;border-radius:6px;background:#e9e5fc"></div>
<svg style="left:1456px;top:485px" width="16" height="16" viewBox="0 0 16 16" fill="#8e7ef0"><circle cx="8.8" cy="8" r="5.4"/><path d="M2.2 4.5v7" stroke="#8e7ef0" stroke-width="1.2"/><path d="M8.3 5v6c1.5 0 2.6-1.2 2.6-3S9.8 5 8.3 5z" fill="#d9d2fb"/></svg>
<div class="a" style="left:1600.3px;top:485.50px;font-size:12.5px;line-height:16px;color:#666;font-weight:normal;">详情</div>
<svg style="left:1634px;top:489px" width="6" height="9" viewBox="0 0 6 9"><path d="M1 .8l3.6 3.7L1 8.2" stroke="#aaa" stroke-width="1.1" fill="none"/></svg>
<div class="a" style="left:1451px;top:512.00px;font-size:24.5px;line-height:30px;color:#333;font-weight:normal;">0</div>
<div class="a" style="left:1451px;top:543.00px;font-size:12px;line-height:16px;color:#666;font-weight:normal;">退款订单</div>
<svg style="left:1634.5px;top:544px" width="11" height="11" viewBox="0 0 11 11"><circle cx="5.5" cy="5.5" r="4.9" stroke="#f5c38e" stroke-width="1.1" fill="#fde9d2"/><path d="M5.5 3v3.2M5.5 7.2v.9" stroke="#f0a860" stroke-width="1.1"/></svg>
<div class="card" style="left:242px;top:594px;width:697px;height:325px;"></div>
<div class="a" style="left:254.5px;top:605.00px;font-size:14px;line-height:20px;color:#333;font-weight:normal;">销量榜</div>
<div class="a" style="left:255px;top:638.5px;width:671px;height:39px;background:#f5f5f5"></div>
<div class="a" style="left:270.5px;top:649.00px;font-size:14px;line-height:20px;color:#666;font-weight:normal;">排名</div>
<div class="a" style="left:326.5px;top:649.00px;font-size:14px;line-height:20px;color:#666;font-weight:normal;">名称</div>
<div class="a" style="left:839.5px;top:649.00px;font-size:14px;line-height:20px;color:#666;font-weight:normal;">销量</div>
<div class="a" style="left:255px;top:677.5px;width:671px;height:39px;background:#fff"></div>
<svg style="left:275px;top:688.5px" width="18" height="19" viewBox="0 0 18 19"><polygon points="9.00,0.10 0.86,4.80 0.86,14.20 9.00,18.90 17.14,14.20 17.14,4.80" fill="#e6b420"/><polygon points="9.00,2.70 3.11,6.10 3.11,12.90 9.00,16.30 14.89,12.90 14.89,6.10" fill="#fdd94a"/><circle cx="9" cy="9.5" r="3" fill="none" stroke="#f6b668" stroke-width="1.4"/></svg>
<div class="a" style="left:326.5px;top:688.0px;width:20px;height:20px;border-radius:3px;background:#97a3bd"></div>
<div class="a" style="left:330px;top:692.0px;width:12px;height:12px;border-radius:50%;background:radial-gradient(rgba(255,255,255,.25),rgba(255,255,255,0) 70%)"></div>
<div class="a" style="left:356px;top:688.00px;font-size:14px;line-height:20px;color:#333;font-weight:normal;">刀锋男鞋夏季透气防臭飞织运动鞋男潮流百搭休闲网面跑步鞋大码46</div>
<div class="a" style="left:839.5px;top:688.00px;font-size:14px;line-height:20px;color:#333;font-weight:normal;">62</div>
<div class="a" style="left:255px;top:716.5px;width:671px;height:39px;background:#fafafa"></div>
<svg style="left:275px;top:727.5px" width="18" height="19" viewBox="0 0 18 19"><polygon points="9.00,0.10 0.86,4.80 0.86,14.20 9.00,18.90 17.14,14.20 17.14,4.80" fill="#a9b0ba"/><polygon points="9.00,2.70 3.11,6.10 3.11,12.90 9.00,16.30 14.89,12.90 14.89,6.10" fill="#e8f0f9"/><circle cx="9" cy="9.5" r="3" fill="none" stroke="#b6c7d8" stroke-width="1.4"/></svg>
<div class="a" style="left:326.5px;top:727.0px;width:20px;height:20px;border-radius:3px;background:#d9d9d9"></div>
<div class="a" style="left:330px;top:731.0px;width:12px;height:12px;border-radius:50%;background:radial-gradient(rgba(255,255,255,.25),rgba(255,255,255,0) 70%)"></div>
<div class="a" style="left:356px;top:727.00px;font-size:14px;line-height:20px;color:#333;font-weight:normal;">中国风龙图案棒球帽男潮牌休闲鸭舌帽女潮流百搭防晒遮阳太阳帽子</div>
<div class="a" style="left:839.5px;top:727.00px;font-size:14px;line-height:20px;color:#333;font-weight:normal;">42</div>
<div class="a" style="left:255px;top:755.5px;width:671px;height:39px;background:#fff"></div>
<svg style="left:275px;top:766.5px" width="18" height="19" viewBox="0 0 18 19"><polygon points="9.00,0.10 0.86,4.80 0.86,14.20 9.00,18.90 17.14,14.20 17.14,4.80" fill="#e4975a"/><polygon points="9.00,2.70 3.11,6.10 3.11,12.90 9.00,16.30 14.89,12.90 14.89,6.10" fill="#f9c28e"/><circle cx="9" cy="9.5" r="3" fill="none" stroke="#f0a868" stroke-width="1.4"/></svg>
<div class="a" style="left:326.5px;top:766.0px;width:20px;height:20px;border-radius:3px;background:#e3d3cd"></div>
<div class="a" style="left:330px;top:770.0px;width:12px;height:12px;border-radius:50%;background:radial-gradient(rgba(255,255,255,.25),rgba(255,255,255,0) 70%)"></div>
<div class="a" style="left:356px;top:766.00px;font-size:14px;line-height:20px;color:#333;font-weight:normal;">森马国潮短裤男夏季潮印花大码中国风裤子休闲嘻哈潮流宽松五分裤</div>
<div class="a" style="left:839.5px;top:766.00px;font-size:14px;line-height:20px;color:#333;font-weight:normal;">31</div>
<div class="a" style="left:255px;top:794.5px;width:671px;height:39px;background:#fafafa"></div>
<svg style="left:275px;top:805.5px" width="18" height="19" viewBox="0 0 18 19"><polygon points="9.00,0.10 0.86,4.80 0.86,14.20 9.00,18.90 17.14,14.20 17.14,4.80" fill="#d6d6d6"/><polygon points="9.00,2.70 3.11,6.10 3.11,12.90 9.00,16.30 14.89,12.90 14.89,6.10" fill="#e3e3e3"/><text x="9" y="12.8" font-size="9.5" text-anchor="middle" fill="#fff" font-weight="bold" font-family="Liberation Sans">4</text></svg>
<div class="a" style="left:326.5px;top:805.0px;width:20px;height:20px;border-radius:3px;background:#a0b79e"></div>
<div class="a" style="left:330px;top:809.0px;width:12px;height:12px;border-radius:50%;background:radial-gradient(rgba(255,255,255,.25),rgba(255,255,255,0) 70%)"></div>
<div class="a" style="left:356px;top:805.00px;font-size:14px;line-height:20px;color:#333;font-weight:normal;">猫人男士睡衣男夏季100%纯棉薄款圆领套头短袖套装男ins潮休闲运动...</div>
<div class="a" style="left:839.5px;top:805.00px;font-size:14px;line-height:20px;color:#333;font-weight:normal;">13</div>
<div class="a" style="left:255px;top:833.5px;width:671px;height:39px;background:#fff"></div>
<svg style="left:275px;top:844.5px" width="18" height="19" viewBox="0 0 18 19"><polygon points="9.00,0.10 0.86,4.80 0.86,14.20 9.00,18.90 17.14,14.20 17.14,4.80" fill="#d6d6d6"/><polygon points="9.00,2.70 3.11,6.10 3.11,12.90 9.00,16.30 14.89,12.90 14.89,6.10" fill="#e3e3e3"/><text x="9" y="12.8" font-size="9.5" text-anchor="middle" fill="#fff" font-weight="bold" font-family="Liberation Sans">5</text></svg>
<div class="a" style="left:326.5px;top:844.0px;width:20px;height:20px;border-radius:3px;background:#7c8497"></div>
<div class="a" style="left:330px;top:848.0px;width:12px;height:12px;border-radius:50%;background:radial-gradient(rgba(255,255,255,.25),rgba(255,255,255,0) 70%)"></div>
<div class="a" style="left:356px;top:844.00px;font-size:14px;line-height:20px;color:#333;font-weight:normal;">嘻哈休闲运动套装男士夏季潮牌ins胖子大码青少年男装短裤短袖t恤</div>
<div class="a" style="left:839.5px;top:844.00px;font-size:14px;line-height:20px;color:#333;font-weight:normal;">9</div>
<div class="card" style="left:960px;top:594px;width:697px;height:325px;"></div>
<div class="a" style="left:972.5px;top:605.00px;font-size:14px;line-height:20px;color:#333;font-weight:normal;">热搜榜</div>
<div class="a" style="left:975px;top:638.5px;width:441px;height:39px;background:#f5f5f5"></div>
<div class="a" style="left:988.5px;top:649.00px;font-size:14px;line-height:20px;color:#666;font-weight:normal;">排名</div>
<div class="a" style="left:1044.5px;top:649.00px;font-size:14px;line-height:20px;color:#666;font-weight:normal;">名称</div>
<div class="a" style="left:1327.5px;top:649.00px;font-size:14px;line-height:20px;color:#666;font-weight:normal;">搜索量(次)</div>
<div class="a" style="left:975px;top:677.5px;width:441px;height:39px;background:#fff"></div>
<svg style="left:994px;top:689.0px" width="18" height="19" viewBox="0 0 18 19"><polygon points="9.00,0.10 0.86,4.80 0.86,14.20 9.00,18.90 17.14,14.20 17.14,4.80" fill="#e6b420"/><polygon points="9.00,2.70 3.11,6.10 3.11,12.90 9.00,16.30 14.89,12.90 14.89,6.10" fill="#fdd94a"/><circle cx="9" cy="9.5" r="3" fill="none" stroke="#f6b668" stroke-width="1.4"/></svg>
<div class="a" style="left:1044.5px;top:688.00px;font-size:14px;line-height:20px;color:#333;font-weight:normal;">皮</div>
<div class="a" style="left:1327.5px;top:688.00px;font-size:14px;line-height:20px;color:#333;font-weight:normal;">1</div>
<svg style="left:1438px;top:635px" width="200" height="200" viewBox="0 0 200 200"><circle cx="100.2" cy="100" r="68.1" stroke="#5470c6" stroke-width="36.2" fill="none"/></svg>
</body></html>
